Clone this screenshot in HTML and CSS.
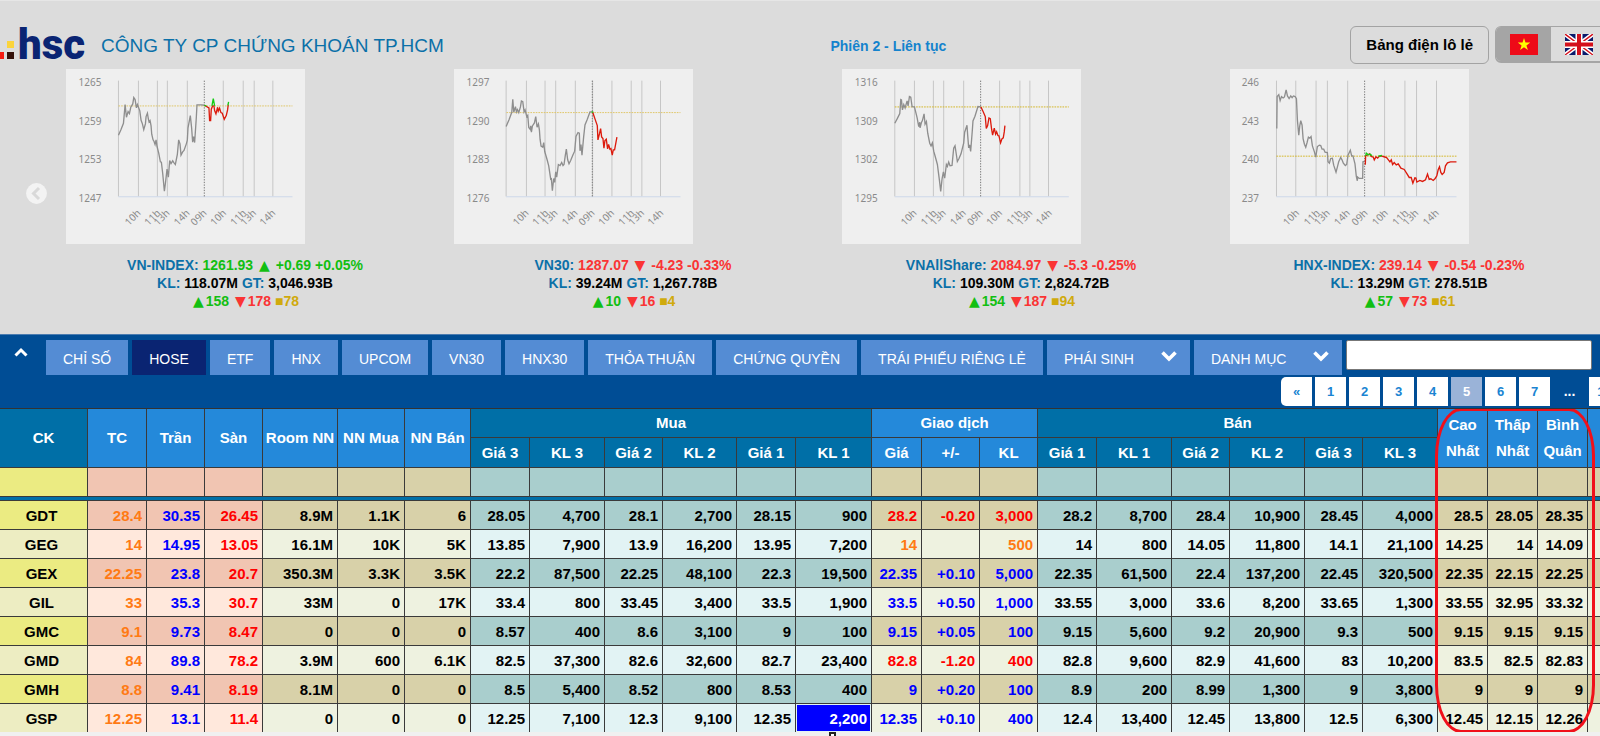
FILE: index.html
```html
<!DOCTYPE html>
<html lang="vi">
<head>
<meta charset="utf-8">
<title>HSC - Bảng giá HOSE</title>
<link rel="stylesheet" href="styles.css">
</head>
<body>
<header class="top">
  <div class="brand">
    <div class="logo">
      <svg class="logo-dots" width="18" height="34" viewBox="0 0 18 34" aria-hidden="true"><path d="M0 26h4v7H0z" fill="#f41b12"/><path d="M7 15h7v7H7z" fill="#fbd43c"/><path d="M7 26h7v7H7z" fill="#34110a"/></svg>
      <span class="logo-text">hsc</span>
    </div>
    <h1 class="company">CÔNG TY CP CHỨNG KHOÁN TP.HCM</h1>
  </div>
  <div class="phase">Phiên 2 - Liên tục</div>
  <div class="actions">
    <button class="odd-lot" type="button">Bảng điện lô lẻ</button>
    <div class="lang">
      <button class="lang-item lang-on" type="button" aria-label="Tiếng Việt"><svg width="28" height="21" viewBox="0 0 28 21"><path fill="#ee0a18" d="M0 0h28v21H0z"/><path fill="#ff0" d="M14 4l1.5 4.6h4.8l-3.9 2.8 1.5 4.7-3.9-2.9-3.9 2.9 1.5-4.7-3.9-2.8h4.8z"/></svg></button>
      <button class="lang-item" type="button" aria-label="English"><svg width="28" height="21" viewBox="0 0 28 21"><path fill="#0a1a6c" d="M0 0h28v21H0z"/><path d="M0 0l28 21M28 0L0 21" stroke="#fff" stroke-width="4.4"/><path d="M0 0l28 21M28 0L0 21" stroke="#d4101c" stroke-width="1.4"/><path d="M14 0v21M0 10.500h28" stroke="#fff" stroke-width="7"/><path d="M14 0v21M0 10.500h28" stroke="#d4101c" stroke-width="4"/></svg></button>
    </div>
  </div>
</header>

<section class="indices">
  <button class="prev" type="button" aria-label="Trước"><svg width="21" height="21" viewBox="0 0 21 21"><circle cx="10.500" cy="10.500" r="10.400" fill="#f3f3f3"/><path d="M13 5l-5.500 5.500L13 16" fill="none" stroke="#d9d9d9" stroke-width="3"/></svg></button>
  <div class="index-list">
    <article class="index">
      <svg class="chart" viewBox="199 207 717 526">
        <path class="grid" d="M356 242V590M416 242V590M473 242V590M503 242V590M563 242V590M671 242V590M731 242V590M764 242V590M820 242V590"/>
        <path class="axis" d="M356 591H879"/><path class="session" d="M614 242V590"/><path class="ref" d="M356 318H879"/>
        <path class="old" d="M356 406L364 388 371 370 376 314 380 352 385 335 389 341 393 322 399 312 402 293 406 299 410 324 413 314 420 332 424 361 428 372 432 389 437 372 439 350 443 340 446 358 448 366 451 362 454 378 456 403 460 420 463 425 466 434 469 420 472 440 477 460 482 486 485 487 489 521 494 574 497 552 502 508 506 532 510 482 514 491 519 483 523 489 527 494 533 464 537 420 541 432 544 466 549 456 553 452 560 432 563 421 565 384 572 347 576 385 579 427 582 410 585 428 590 353 592 315 606 315 614 316"/>
        <path class="down" d="M614 316L628 324 630 362 633 362 635 328 639 318 643 318 645 332 649 342 654 322 656 334 660 325 664 338 668 340 674 358 680 347 684 330 686 314"/>
        <path class="up" d="M614 316L620 318M637 318L641 296 645 318M685 316L687 306"/>
        <g class="ylab"><text x="236" y="259">1265</text><text x="236" y="375">1259</text><text x="236" y="491">1253</text><text x="236" y="607">1247</text></g>
        <g class="xlab"><text transform="translate(425 642) rotate(-45)">10h</text><text transform="translate(484 642) rotate(-45)">11h</text><text transform="translate(512 642) rotate(-45)">13h</text><text transform="translate(572 642) rotate(-45)">14h</text><text transform="translate(623 642) rotate(-45)">09h</text><text transform="translate(682 642) rotate(-45)">10h</text><text transform="translate(742 642) rotate(-45)">11h</text><text transform="translate(772 642) rotate(-45)">13h</text><text transform="translate(830 642) rotate(-45)">14h</text></g>
      </svg>
      <div class="quote">
        <p><span class="name">VN-INDEX:</span> <span class="gain">1261.93 <i class="tri">▲</i> +0.69 +0.05%</span></p>
        <p><span class="name">KL:</span> 118.07M <span class="name">GT:</span> 3,046.93B</p>
        <p><span class="gain"><i class="tri">▲</i>158</span> <span class="loss"><i class="tri">▼</i>178</span> <span class="flat">■78</span></p>
      </div>
    </article>
    <article class="index">
      <svg class="chart" viewBox="41 57 717 526">
        <path class="grid" d="M197 92V440M258 92V440M314 92V440M346 92V440M405 92V440M457 92V440M515 92V440M573 92V440M605 92V440M661 92V440"/>
        <path class="axis" d="M197 441H721"/><path class="session" d="M456 92V440"/><path class="ref" d="M198 188H721"/>
        <path class="old" d="M197 230L206 209 214 187 217 148 220 187 225 170 228 186 231 179 235 188 240 171 243 153 247 155 251 186 254 180 259 200 262 196 265 233 269 238 271 228 273 247 276 228 282 219 286 200 290 232 294 222 297 240 299 268 302 289 307 292 310 278 313 305 320 329 325 348 331 388 333 387 336 423 340 386 343 398 346 366 349 382 354 344 359 347 364 338 368 347 371 344 375 316 378 298 382 330 386 342 391 332 398 315 403 304 407 260 413 248 417 250 419 303 422 284 425 316 430 261 434 225 441 208 449 186 457 186"/>
        <path class="down" d="M457 186L464 207 471 227 473 270 478 250 481 236 484 261 488 266 491 295 494 272 498 268 502 297 505 284 509 298 512 296 516 316 519 300 523 300 530 262"/>
        <path class="up" d="M454 187L459 186"/>
        <g class="ylab"><text x="78" y="109">1297</text><text x="78" y="225">1290</text><text x="78" y="341">1283</text><text x="78" y="457">1276</text></g>
        <g class="xlab"><text transform="translate(267 492) rotate(-45)">10h</text><text transform="translate(326 492) rotate(-45)">11h</text><text transform="translate(354 492) rotate(-45)">13h</text><text transform="translate(414 492) rotate(-45)">14h</text><text transform="translate(465 492) rotate(-45)">09h</text><text transform="translate(524 492) rotate(-45)">10h</text><text transform="translate(584 492) rotate(-45)">11h</text><text transform="translate(614 492) rotate(-45)">13h</text><text transform="translate(672 492) rotate(-45)">14h</text></g>
      </svg>
      <div class="quote">
        <p><span class="name">VN30:</span> <span class="loss">1287.07 <i class="tri">▼</i> -4.23 -0.33%</span></p>
        <p><span class="name">KL:</span> 39.24M <span class="name">GT:</span> 1,267.78B</p>
        <p><span class="gain"><i class="tri">▲</i>10</span> <span class="loss"><i class="tri">▼</i>16</span> <span class="flat">■4</span></p>
      </div>
    </article>
    <article class="index">
      <svg class="chart" viewBox="66 147 717 526">
        <path class="grid" d="M224 182V530M283 182V530M340 182V530M371 182V530M431 182V530M539 182V530M600 182V530M630 182V530M686 182V530"/>
        <path class="axis" d="M224 531H747"/><path class="session" d="M482 182V530"/><path class="ref ref-strong" d="M224 261H747"/>
        <path class="old" d="M224 310L231 297 239 281 242 239 244 240 247 270 251 254 255 264 261 243 264 258 268 230 272 232 276 260 283 261 291 293 296 320 299 307 300 324 304 308 307 302 312 282 315 313 319 305 323 340 329 370 333 378 337 369 341 394 348 419 352 434 358 480 362 515 366 478 370 456 374 475 379 434 382 440 386 427 390 438 396 437 401 385 405 378 409 404 412 425 417 416 423 402 431 370 434 337 441 316 443 345 446 384 449 375 452 395 457 332 459 303 465 289 474 260 483 261"/>
        <path class="down" d="M483 261L490 276 496 290 499 326 503 317 507 294 511 296 515 328 518 346 523 325 527 343 530 336 534 347 537 348 542 369 546 357 550 354 553 336 555 317"/>
        <g class="ylab"><text x="104" y="199">1316</text><text x="104" y="315">1309</text><text x="104" y="431">1302</text><text x="104" y="547">1295</text></g>
        <g class="xlab"><text transform="translate(292 582) rotate(-45)">10h</text><text transform="translate(352 582) rotate(-45)">11h</text><text transform="translate(380 582) rotate(-45)">13h</text><text transform="translate(440 582) rotate(-45)">14h</text><text transform="translate(491 582) rotate(-45)">09h</text><text transform="translate(549 582) rotate(-45)">10h</text><text transform="translate(610 582) rotate(-45)">11h</text><text transform="translate(640 582) rotate(-45)">13h</text><text transform="translate(698 582) rotate(-45)">14h</text></g>
      </svg>
      <div class="quote">
        <p><span class="name">VNAllShare:</span> <span class="loss">2084.97 <i class="tri">▼</i> -5.3 -0.25%</span></p>
        <p><span class="name">KL:</span> 109.30M <span class="name">GT:</span> 2,824.72B</p>
        <p><span class="gain"><i class="tri">▲</i>154</span> <span class="loss"><i class="tri">▼</i>187</span> <span class="flat">■94</span></p>
      </div>
    </article>
    <article class="index">
      <svg class="chart" viewBox="90 207 717 526">
        <path class="grid" d="M229 242V590M287 242V590M348 242V590M382 242V590M443 242V590M554 242V590M615 242V590M650 242V590M710 242V590"/>
        <path class="axis" d="M229 591H770"/><path class="session" d="M494 242V590"/><path class="ref ref-strong" d="M229 469H770"/>
        <path class="old" d="M230 386L231 290 236 284 240 302 244 290 249 294 253 291 258 270 262 288 267 296 272 288 276 293 280 288 285 290 289 296 292 362 296 406 299 378 302 362 306 376 309 416 313 433 317 442 321 428 325 412 329 415 333 410 337 438 343 456 347 472 352 440 358 436 362 437 366 448 371 448 375 457 382 458 384 486 388 490 392 476 397 475 401 496 408 517 412 502 416 486 422 473 426 480 430 490 436 497 440 494 444 466 451 451 455 468 459 468 465 492 469 530 472 543 473 532 478 536 488 536 489 486 495 484"/>
        <path class="down" d="M496 495L497 468 509 462 514 470 520 472 523 480 528 471 533 475 537 470 545 468 550 470 560 473 566 481 570 486 574 480 578 494 583 488 589 495 595 492 603 505 613 509 620 520 628 533 634 533 639 550 645 534 648 535 651 547 660 542 668 545 677 540 683 523 688 539 693 537 700 542 706 536 711 528 715 510 719 501 723 518 727 524 733 518 737 498 743 489 752 486 770 486"/>
        <path class="up" d="M497 468L499 460 505 465 511 463 516 468M535 469L546 467"/>
        <g class="ylab"><text x="125" y="259">246</text><text x="125" y="375">243</text><text x="125" y="491">240</text><text x="125" y="607">237</text></g>
        <g class="xlab"><text transform="translate(299 642) rotate(-45)">10h</text><text transform="translate(361 642) rotate(-45)">11h</text><text transform="translate(392 642) rotate(-45)">13h</text><text transform="translate(452 642) rotate(-45)">14h</text><text transform="translate(505 642) rotate(-45)">09h</text><text transform="translate(566 642) rotate(-45)">10h</text><text transform="translate(627 642) rotate(-45)">11h</text><text transform="translate(658 642) rotate(-45)">13h</text><text transform="translate(719 642) rotate(-45)">14h</text></g>
      </svg>
      <div class="quote">
        <p><span class="name">HNX-INDEX:</span> <span class="loss">239.14 <i class="tri">▼</i> -0.54 -0.23%</span></p>
        <p><span class="name">KL:</span> 13.29M <span class="name">GT:</span> 278.51B</p>
        <p><span class="gain"><i class="tri">▲</i>57</span> <span class="loss"><i class="tri">▼</i>73</span> <span class="flat">■61</span></p>
      </div>
    </article>
  </div>
</section>

<section class="bar">
  <nav class="tabs">
    <button class="collapse" type="button" aria-label="Thu gọn"><svg width="14" height="10" viewBox="0 0 14 10"><path d="M1.500 8.500L7 3l5.500 5.500" fill="none" stroke="#fff" stroke-width="3"/></svg></button>
    <button class="tab" type="button">CHỈ SỐ</button>
    <button class="tab tab-on" type="button">HOSE</button>
    <button class="tab" type="button">ETF</button>
    <button class="tab" type="button">HNX</button>
    <button class="tab" type="button">UPCOM</button>
    <button class="tab" type="button">VN30</button>
    <button class="tab" type="button">HNX30</button>
    <button class="tab" type="button">THỎA THUẬN</button>
    <button class="tab" type="button">CHỨNG QUYỀN</button>
    <button class="tab" type="button">TRÁI PHIẾU RIÊNG LẺ</button>
    <button class="tab tab-menu" type="button">PHÁI SINH<svg width="16" height="11" viewBox="0 0 16 11"><path d="M1.500 1.500L8 8l6.500-6.500" fill="none" stroke="#fff" stroke-width="3.600"/></svg></button>
    <button class="tab tab-menu" type="button">DANH MỤC<svg width="16" height="11" viewBox="0 0 16 11"><path d="M1.500 1.500L8 8l6.500-6.500" fill="none" stroke="#fff" stroke-width="3.600"/></svg></button>
    <input class="search" type="text" aria-label="Tìm mã chứng khoán">
  </nav>
  <nav class="pages" aria-label="Trang">
    <a class="page page-first" href="#">«</a>
    <a class="page" href="#">1</a>
    <a class="page" href="#">2</a>
    <a class="page" href="#">3</a>
    <a class="page" href="#">4</a>
    <a class="page page-on" href="#">5</a>
    <a class="page" href="#">6</a>
    <a class="page" href="#">7</a>
    <span class="dots">...</span>
    <a class="page" href="#">12</a>
  </nav>
</section>

<main class="board">
  <table class="prices">
    <colgroup><col class="w88"><col class="w59"><col class="w58"><col class="w58"><col class="w75"><col class="w67"><col class="w66"><col class="w59"><col class="w75"><col class="w58"><col class="w74"><col class="w59"><col class="w76"><col class="w50"><col class="w58"><col class="w58"><col class="w59"><col class="w75"><col class="w58"><col class="w75"><col class="w58"><col class="w75"><col class="w50"><col class="w50"><col class="w50"><col class="w75"></colgroup>
    <thead>
      <tr class="head">
        <th class="deep" rowspan="2">CK</th><th rowspan="2">TC</th><th rowspan="2">Trần</th><th rowspan="2">Sàn</th><th rowspan="2">Room NN</th><th rowspan="2">NN Mua</th><th rowspan="2">NN Bán</th>
        <th class="deep" colspan="6">Mua</th><th colspan="3">Giao dịch</th><th class="deep" colspan="6">Bán</th>
        <th rowspan="2">Cao<br>Nhất</th><th rowspan="2">Thấp<br>Nhất</th><th rowspan="2">Bình<br>Quân</th><th rowspan="2"></th>
      </tr>
      <tr class="head subhead">
        <th class="deep">Giá 3</th><th class="deep">KL 3</th><th class="deep">Giá 2</th><th class="deep">KL 2</th><th class="deep">Giá 1</th><th class="deep">KL 1</th>
        <th>Giá</th><th>+/-</th><th>KL</th>
        <th class="deep">Giá 1</th><th class="deep">KL 1</th><th class="deep">Giá 2</th><th class="deep">KL 2</th><th class="deep">Giá 3</th><th class="deep">KL 3</th>
      </tr>
      <tr class="pinned"><td></td><td></td><td></td><td></td><td></td><td></td><td></td><td></td><td></td><td></td><td></td><td></td><td></td><td></td><td></td><td></td><td></td><td></td><td></td><td></td><td></td><td></td><td></td><td></td><td></td><td></td></tr>
      <tr class="divider"><td colspan="26"></td></tr>
    </thead>
    <tbody>
      <tr class="down-row"><td>GDT</td><td>28.4</td><td>30.35</td><td>26.45</td><td>8.9M</td><td>1.1K</td><td>6</td><td>28.05</td><td>4,700</td><td>28.1</td><td>2,700</td><td>28.15</td><td>900</td><td>28.2</td><td>-0.20</td><td>3,000</td><td>28.2</td><td>8,700</td><td>28.4</td><td>10,900</td><td>28.45</td><td>4,000</td><td>28.5</td><td>28.05</td><td>28.35</td><td></td></tr>
      <tr class="ref-row"><td>GEG</td><td>14</td><td>14.95</td><td>13.05</td><td>16.1M</td><td>10K</td><td>5K</td><td>13.85</td><td>7,900</td><td>13.9</td><td>16,200</td><td>13.95</td><td>7,200</td><td>14</td><td></td><td>500</td><td>14</td><td>800</td><td>14.05</td><td>11,800</td><td>14.1</td><td>21,100</td><td>14.25</td><td>14</td><td>14.09</td><td></td></tr>
      <tr class="up-row"><td>GEX</td><td>22.25</td><td>23.8</td><td>20.7</td><td>350.3M</td><td>3.3K</td><td>3.5K</td><td>22.2</td><td>87,500</td><td>22.25</td><td>48,100</td><td>22.3</td><td>19,500</td><td>22.35</td><td>+0.10</td><td>5,000</td><td>22.35</td><td>61,500</td><td>22.4</td><td>137,200</td><td>22.45</td><td>320,500</td><td>22.35</td><td>22.15</td><td>22.25</td><td></td></tr>
      <tr class="up-row"><td>GIL</td><td>33</td><td>35.3</td><td>30.7</td><td>33M</td><td>0</td><td>17K</td><td>33.4</td><td>800</td><td>33.45</td><td>3,400</td><td>33.5</td><td>1,900</td><td>33.5</td><td>+0.50</td><td>1,000</td><td>33.55</td><td>3,000</td><td>33.6</td><td>8,200</td><td>33.65</td><td>1,300</td><td>33.55</td><td>32.95</td><td>33.32</td><td></td></tr>
      <tr class="up-row"><td>GMC</td><td>9.1</td><td>9.73</td><td>8.47</td><td>0</td><td>0</td><td>0</td><td>8.57</td><td>400</td><td>8.6</td><td>3,100</td><td>9</td><td>100</td><td>9.15</td><td>+0.05</td><td>100</td><td>9.15</td><td>5,600</td><td>9.2</td><td>20,900</td><td>9.3</td><td>500</td><td>9.15</td><td>9.15</td><td>9.15</td><td></td></tr>
      <tr class="down-row"><td>GMD</td><td>84</td><td>89.8</td><td>78.2</td><td>3.9M</td><td>600</td><td>6.1K</td><td>82.5</td><td>37,300</td><td>82.6</td><td>32,600</td><td>82.7</td><td>23,400</td><td>82.8</td><td>-1.20</td><td>400</td><td>82.8</td><td>9,600</td><td>82.9</td><td>41,600</td><td>83</td><td>10,200</td><td>83.5</td><td>82.5</td><td>82.83</td><td></td></tr>
      <tr class="up-row"><td>GMH</td><td>8.8</td><td>9.41</td><td>8.19</td><td>8.1M</td><td>0</td><td>0</td><td>8.5</td><td>5,400</td><td>8.52</td><td>800</td><td>8.53</td><td>400</td><td>9</td><td>+0.20</td><td>100</td><td>8.9</td><td>200</td><td>8.99</td><td>1,300</td><td>9</td><td>3,800</td><td>9</td><td>9</td><td>9</td><td></td></tr>
      <tr class="up-row"><td>GSP</td><td>12.25</td><td>13.1</td><td>11.4</td><td>0</td><td>0</td><td>0</td><td>12.25</td><td>7,100</td><td>12.3</td><td>9,100</td><td>12.35</td><td class="flash">2,200</td><td>12.35</td><td>+0.10</td><td>400</td><td>12.4</td><td>13,400</td><td>12.45</td><td>13,800</td><td>12.5</td><td>6,300</td><td>12.45</td><td>12.15</td><td>12.26</td><td></td></tr>
    </tbody>
  </table>
  <div class="marker"></div>
</main>
<footer class="foot"><span class="handle"></span></footer>
</body>
</html>
```
FILE: styles.css
```css
* { box-sizing: border-box; }
body {
  margin: 0;
  overflow: hidden;
  background: #dcdcdc;
  color: #000;
  font-family: "Liberation Sans", Arial, sans-serif;
}
button { border: 0; padding: 0; background: none; font-family: inherit; cursor: pointer; }
svg { display: block; }

/* Header */
.top {
  display: grid;
  grid-template-columns: 830fr 520fr auto;
  align-items: center;
  height: 68px;
  padding-top: 20px;
  border-top: 1px solid #e6e6e6;
}
.top { grid-template-columns: 51.9% 1fr auto; }
.brand { display: flex; align-items: center; }
.logo { display: flex; align-items: center; width: 101px; }
.logo-dots { flex: none; margin-top: -3px; }
.logo-text {
  color: #0a2473;
  font: 900 42px/44px Roboto, "Liberation Sans", sans-serif;
}
.company { margin: 0; padding-top: 2px; color: #0b70a8; font-size: 19px; font-weight: 400; }
.phase { padding-top: 2px; color: #1583cd; font-size: 14px; font-weight: 700; }
.actions { display: flex; align-items: flex-start; gap: 6px; margin-right: -7px; }
.odd-lot {
  height: 38px;
  padding: 0 15px;
  border: 1px solid #a3a3a3;
  border-radius: 6px;
  font-size: 15px;
  font-weight: 700;
}
.lang {
  display: flex;
  height: 37px;
  border: 1px solid #a5a5a5;
  border-bottom-width: 2px;
  border-radius: 6px;
  overflow: hidden;
}
.lang-item { display: flex; align-items: center; justify-content: center; width: 55px; padding-top: 2px; }
.lang-on { background: #a5a5a5; }

/* Index charts */
.indices { display: flex; align-items: center; height: 266px; padding-bottom: 24px; }
.prev { flex: none; width: 51px; padding: 8px 4px 0 26px; }
.index-list { display: grid; grid-template-columns: repeat(4, 1fr); flex: 1; margin-right: -3px; }
.chart { width: 239px; height: 175px; margin-left: 15px; background: #efefef; }
.chart path { fill: none; }
.grid { stroke: #c6c6c6; stroke-width: 3; }
.axis { stroke: #cdd8ea; stroke-width: 3; }
.session { stroke: #777; stroke-width: 3; stroke-dasharray: 4 4; }
.ref { stroke: #e0c76a; stroke-width: 3; stroke-dasharray: 5 3; }
.ref-strong { stroke: #d4b72a; }
.old { stroke: #8e8e8e; stroke-width: 4; }
.down { stroke: #dc1a0c; stroke-width: 4; }
.up { stroke: #14cc14; stroke-width: 4; }
.ylab, .xlab { fill: #8a8a8a; font: 30px "Noto Sans", sans-serif; }
.xlab { text-anchor: end; }
.quote { margin-top: 12px; font-size: 14px; font-weight: 700; line-height: 18px; text-align: center; }
.quote p { margin: 0; height: 18px; }
.tri { margin: 0 2px; font: normal 14px/14px "DejaVu Sans", sans-serif; }
.name { color: #0b70a8; }
.gain { color: #12bf12; }
.loss { color: #fa3434; }
.flat { color: #d0aa0c; }

/* Tab bar and paging */
.bar { height: 74px; padding-top: 5px; border-top: 1px solid #4b7cb0; background: #004d95; overflow: hidden; }
.tabs { display: flex; gap: 4px; padding-right: 8px; }
.collapse { display: flex; justify-content: center; width: 42px; height: 35px; padding-top: 7px; }
.tab {
  height: 35px;
  padding: 2px 17px 0;
  background: #548cd4;
  color: #fff;
  font-size: 14px;
  white-space: nowrap;
}
.tab-on { background: #0a2472; }
.tab-menu { display: flex; align-items: center; gap: 27px; padding-right: 13px; }
.tab-menu svg { margin-top: -4px; }
.search { flex: 1; min-width: 80px; height: 30px; padding: 0 8px; border: 1px solid #777; border-radius: 2px; background: #fff; }
.pages { display: flex; justify-content: flex-end; gap: 3px; margin: 2px -20px 0 0; }
.page, .dots { width: 31px; height: 29px; font-size: 13px; font-weight: 700; line-height: 29px; text-align: center; }
.page { background: #fff; color: #1a84d2; text-decoration: none; }
.page-first { border-radius: 5px 0 0 5px; }
.page-on { background: #9ab3d8; color: #fff; }
.dots { width: 33px; color: #fff; font-size: 14px; }

/* Price board */
.board { position: relative; overflow: hidden; border-top: 1px solid #333; }
.prices { width: 1663px; border-spacing: 0; table-layout: fixed; font-size: 15px; font-weight: 700; }
.w50 { width: 50px; } .w58 { width: 58px; } .w59 { width: 59px; } .w66 { width: 66px; } .w67 { width: 67px; }
.w74 { width: 74px; } .w75 { width: 75px; } .w76 { width: 76px; } .w88 { width: 88px; }
.prices th, .prices td {
  padding: 0;
  border-right: 1px solid #3a3a3a;
  border-bottom: 1px solid #3a3a3a;
  white-space: nowrap;
}
.prices th { height: 29px; background: #2489da; color: #fff; line-height: 26px; }
.prices .subhead th { height: 30px; }
.prices .deep { background: #006fa7; }
.prices td { height: 29px; padding-right: 4px; background: #eef2e0; text-align: right; }
.prices td:nth-child(1) { background: #ededc2; text-align: center; }
.prices td:nth-child(n+2):nth-child(-n+4) { background: #ffe8dc; }
.prices td:nth-child(n+8):nth-child(-n+13),
.prices td:nth-child(n+17):nth-child(-n+22) { background: #e2f3f4; }
.prices .pinned td,
.prices tbody tr:nth-child(odd) td { background: #d8d1a9; }
.prices .pinned td:nth-child(1),
.prices tbody tr:nth-child(odd) td:nth-child(1) { background: #ebeb82; }
.prices .pinned td:nth-child(n+2):nth-child(-n+4),
.prices tbody tr:nth-child(odd) td:nth-child(n+2):nth-child(-n+4) { background: #f1c5b2; }
.prices .pinned td:nth-child(n+8):nth-child(-n+13),
.prices .pinned td:nth-child(n+17):nth-child(-n+22),
.prices tbody tr:nth-child(odd) td:nth-child(n+8):nth-child(-n+13),
.prices tbody tr:nth-child(odd) td:nth-child(n+17):nth-child(-n+22) { background: #a9cecd; }
.prices .divider td { height: 4px; background: #0070a8; }
.prices tbody td:nth-child(2) { color: #ff7a14; }
.prices tbody td:nth-child(3) { color: #00f; }
.prices tbody td:nth-child(4) { color: #f00; }
.down-row td:nth-child(n+14):nth-child(-n+16) { color: #f00; }
.up-row td:nth-child(n+14):nth-child(-n+16) { color: #00f; }
.ref-row td:nth-child(n+14):nth-child(-n+16) { color: #ff7a14; }
.prices tbody tr:last-child td { height: 28px; border-bottom: 0; }
.prices tbody tr:last-child .flash { background: #00f; color: #fff; box-shadow: inset 0 0 0 1px #e2f3f4; }
.marker {
  position: absolute;
  top: -1px;
  left: 1435px;
  width: 160px;
  bottom: -1px;
  border: 3px solid #f0101a;
  border-radius: 26px / 48px;
}
.foot { position: relative; height: 5px; background: #f0f0f0; }
.handle {
  position: absolute;
  top: 0;
  left: 829px;
  width: 7px;
  height: 5px;
  border: 2px solid #222;
  border-bottom: 0;
  background: #fff;
}
```
